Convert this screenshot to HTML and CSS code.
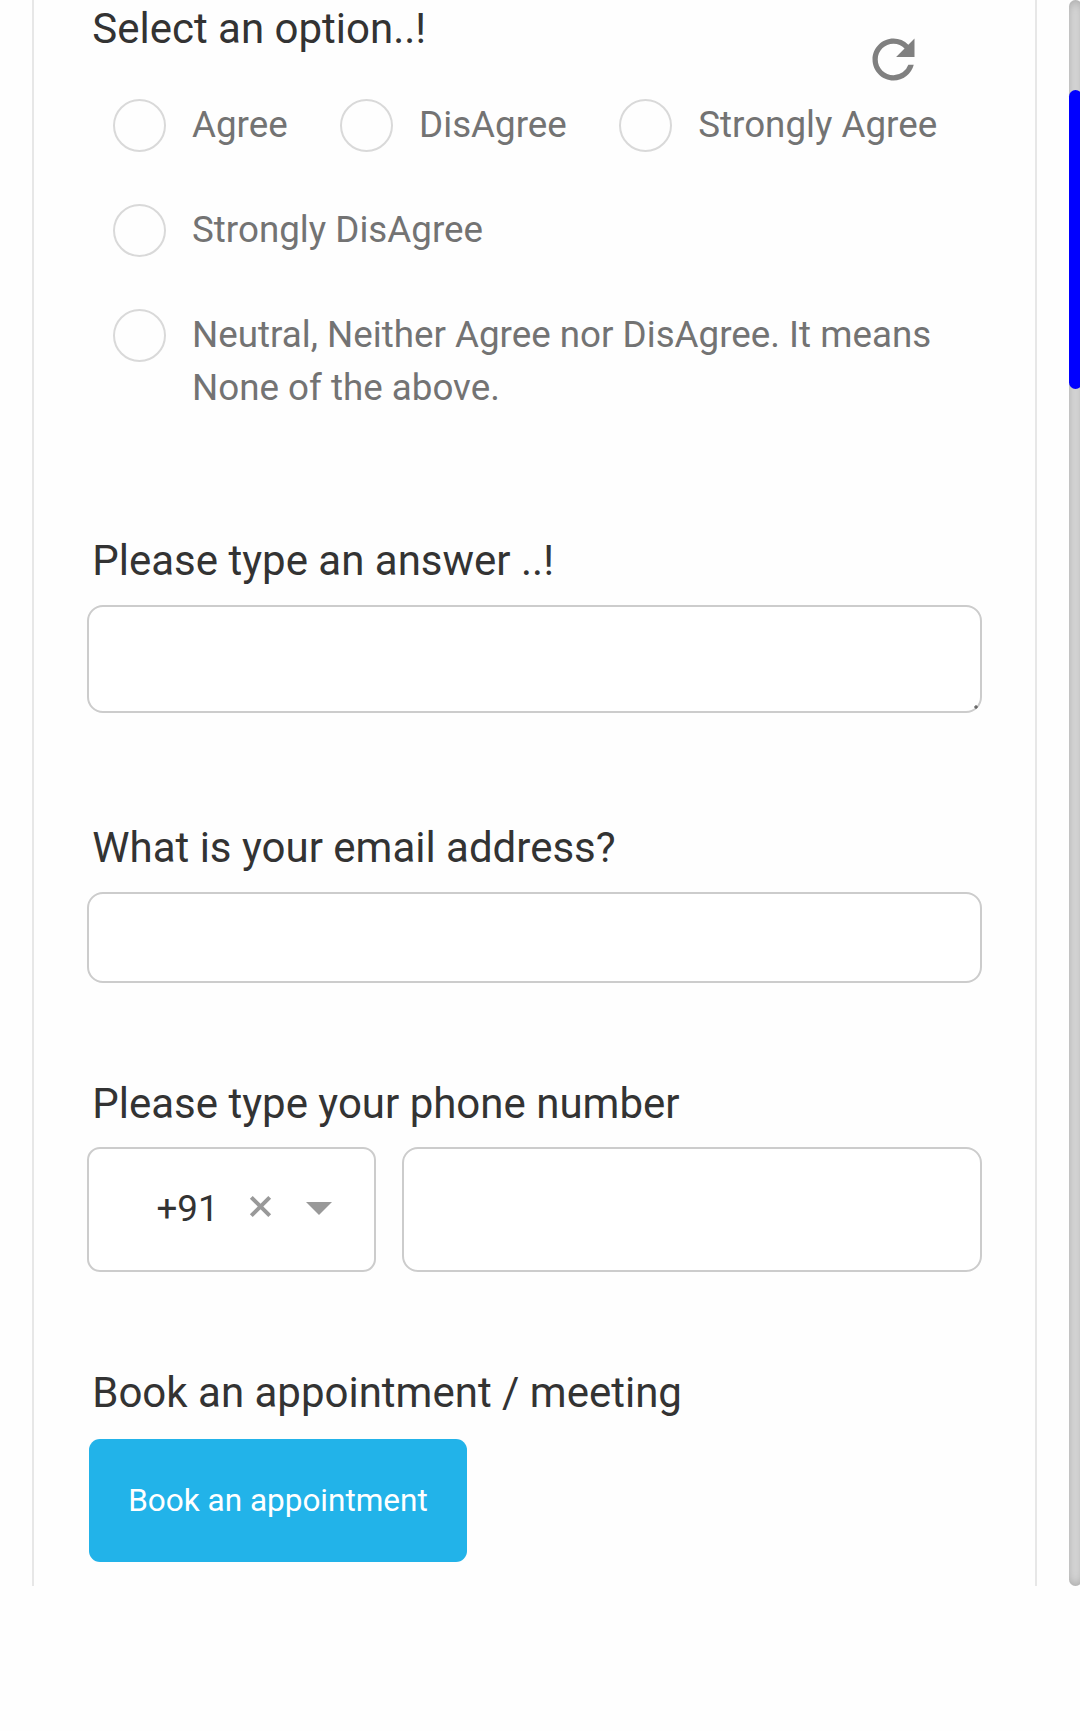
FILE: index.html
```html
<!DOCTYPE html>
<html lang="en">
<head>
<meta charset="utf-8">
<title>Form</title>
<link rel="stylesheet" href="styles.css">
</head>
<body>
<div class="page">
  <form class="card">
    <section class="question question-options">
      <h2 class="title">Select an option..!</h2>
      <button class="reset" type="button" aria-label="Reset">
        <svg viewBox="0 0 24 24"><path d="M17.65 6.35A7.958 7.958 0 0 0 12 4c-4.42 0-7.99 3.58-7.99 8s3.57 8 7.99 8c3.73 0 6.84-2.55 7.73-6h-2.08A5.99 5.99 0 0 1 12 18c-3.31 0-6-2.69-6-6s2.69-6 6-6c1.66 0 3.14.69 4.22 1.78L13 11h7V4l-2.35 2.35z"/></svg>
      </button>
      <div class="options">
        <label class="option"><input class="radio" type="radio" name="opinion"><span class="option-text">Agree</span></label>
        <label class="option"><input class="radio" type="radio" name="opinion"><span class="option-text">DisAgree</span></label>
        <label class="option"><input class="radio" type="radio" name="opinion"><span class="option-text">Strongly Agree</span></label>
        <label class="option"><input class="radio" type="radio" name="opinion"><span class="option-text">Strongly DisAgree</span></label>
        <label class="option"><input class="radio" type="radio" name="opinion"><span class="option-text">Neutral, Neither Agree nor DisAgree. It means None of the above.</span></label>
      </div>
    </section>
    <section class="question question-answer">
      <h2 class="title">Please type an answer ..!</h2>
      <div class="answer">
        <textarea class="field field-answer"></textarea>
        <svg class="grip" viewBox="0 0 4 4"><path d="M1.500 0h1v1.500H4v1H2.500V4h-1V2.500H0v-1h1.500z"/></svg>
      </div>
    </section>
    <section class="question question-email">
      <h2 class="title">What is your email address?</h2>
      <input class="field field-email" type="email">
    </section>
    <section class="question question-phone">
      <h2 class="title">Please type your phone number</h2>
      <div class="phone">
        <div class="code">
          <span class="code-value">+91</span>
          <svg class="clear" viewBox="0 0 21 21"><path d="M1.300 1.300l18.400 18.400M19.700 1.300l-18.400 18.400"/></svg>
          <span class="arrow"></span>
        </div>
        <input class="field field-phone" type="tel">
      </div>
    </section>
    <section class="question question-book">
      <h2 class="title">Book an appointment / meeting</h2>
      <button class="book" type="button">Book an appointment</button>
    </section>
  </form>
  <div class="track"><div class="thumb"></div></div>
</div>
</body>
</html>
```
FILE: styles.css
```css
* { box-sizing: border-box; }

body {
  margin: 0;
  overflow: hidden;
  background: #fefefe;
  font-family: Roboto, "Liberation Sans", sans-serif;
  color: #333;
}

.page {
  display: flex;
  gap: 32px;
  height: 1586px;
  padding-left: 32px;
}

.card {
  flex: none;
  width: 1005px;
  padding: 4px 53px 0;
  border: solid #e7e7e7;
  border-width: 0 2px;
  overflow: hidden;
}

.title {
  margin: 0;
  padding-left: 5.25px;
  font-size: 42px;
  font-weight: 400;
  line-height: 49px;
}

.question-options { position: relative; height: 532px; }
.question-answer { height: 287px; }
.question-email { height: 256px; }
.question-phone { height: 289px; }

.reset {
  position: absolute;
  top: 24px;
  left: 775px;
  width: 63px;
  height: 63px;
  padding: 0;
  border: 0;
  background: none;
}

.reset svg { display: block; fill: #808080; }

.options {
  display: flex;
  flex-wrap: wrap;
  gap: 52px 52.4px;
  padding: 46px 26px 0;
}

.option {
  display: flex;
  gap: 26px;
  color: #737373;
  font-size: 36.75px;
  line-height: 53px;
}

.option-text { margin-top: -1px; }

.radio {
  appearance: none;
  flex: none;
  width: 53px;
  height: 53px;
  margin: 0;
  border: 2px solid #d9d9d9;
  border-radius: 50%;
}

.field {
  display: block;
  width: 895px;
  margin: 0;
  border: 2px solid #ccc;
  border-radius: 16px;
  background: #fff;
  resize: none;
}

.answer { position: relative; padding-top: 20px; }
.field-answer { height: 108px; }

.grip {
  position: absolute;
  right: 4px;
  bottom: 4px;
  width: 4px;
  height: 4px;
  fill: #444;
}

.field-email { height: 91px; margin-top: 20px; }

.phone {
  display: flex;
  gap: 26px;
  padding-top: 19px;
}

.code {
  display: flex;
  flex: none;
  align-items: center;
  width: 289px;
  height: 125px;
  padding: 0 0 2px 67.5px;
  border: 2px solid #ccc;
  border-radius: 13px;
  background: #fff;
}

.code-value { width: 93.5px; font-size: 36.75px; line-height: 53px; }

.clear {
  width: 21px;
  height: 21px;
  margin-top: -4px;
  overflow: visible;
  fill: none;
  stroke: #999;
  stroke-width: 4;
}

.arrow {
  margin-left: 35px;
  border: solid transparent;
  border-width: 13px 13px 0;
  border-top-color: #999;
}

.field-phone { flex: none; width: 580px; height: 125px; }

.book {
  display: block;
  width: 378px;
  height: 123px;
  margin: 22px 0 0 2px;
  padding: 0;
  border: 0;
  border-radius: 11px;
  background: #22b3e9;
  color: #fff;
  font: 31.5px/37px Roboto, "Liberation Sans", sans-serif;
}

.track {
  flex: none;
  width: 13px;
  padding-top: 90px;
  border-radius: 6.5px;
  background: #e0e0e0;
  box-shadow: inset 0 0 11px rgba(128, 128, 128, 0.65);
}

.thumb { height: 299px; border-radius: 6.5px; background: #00f; }
```
